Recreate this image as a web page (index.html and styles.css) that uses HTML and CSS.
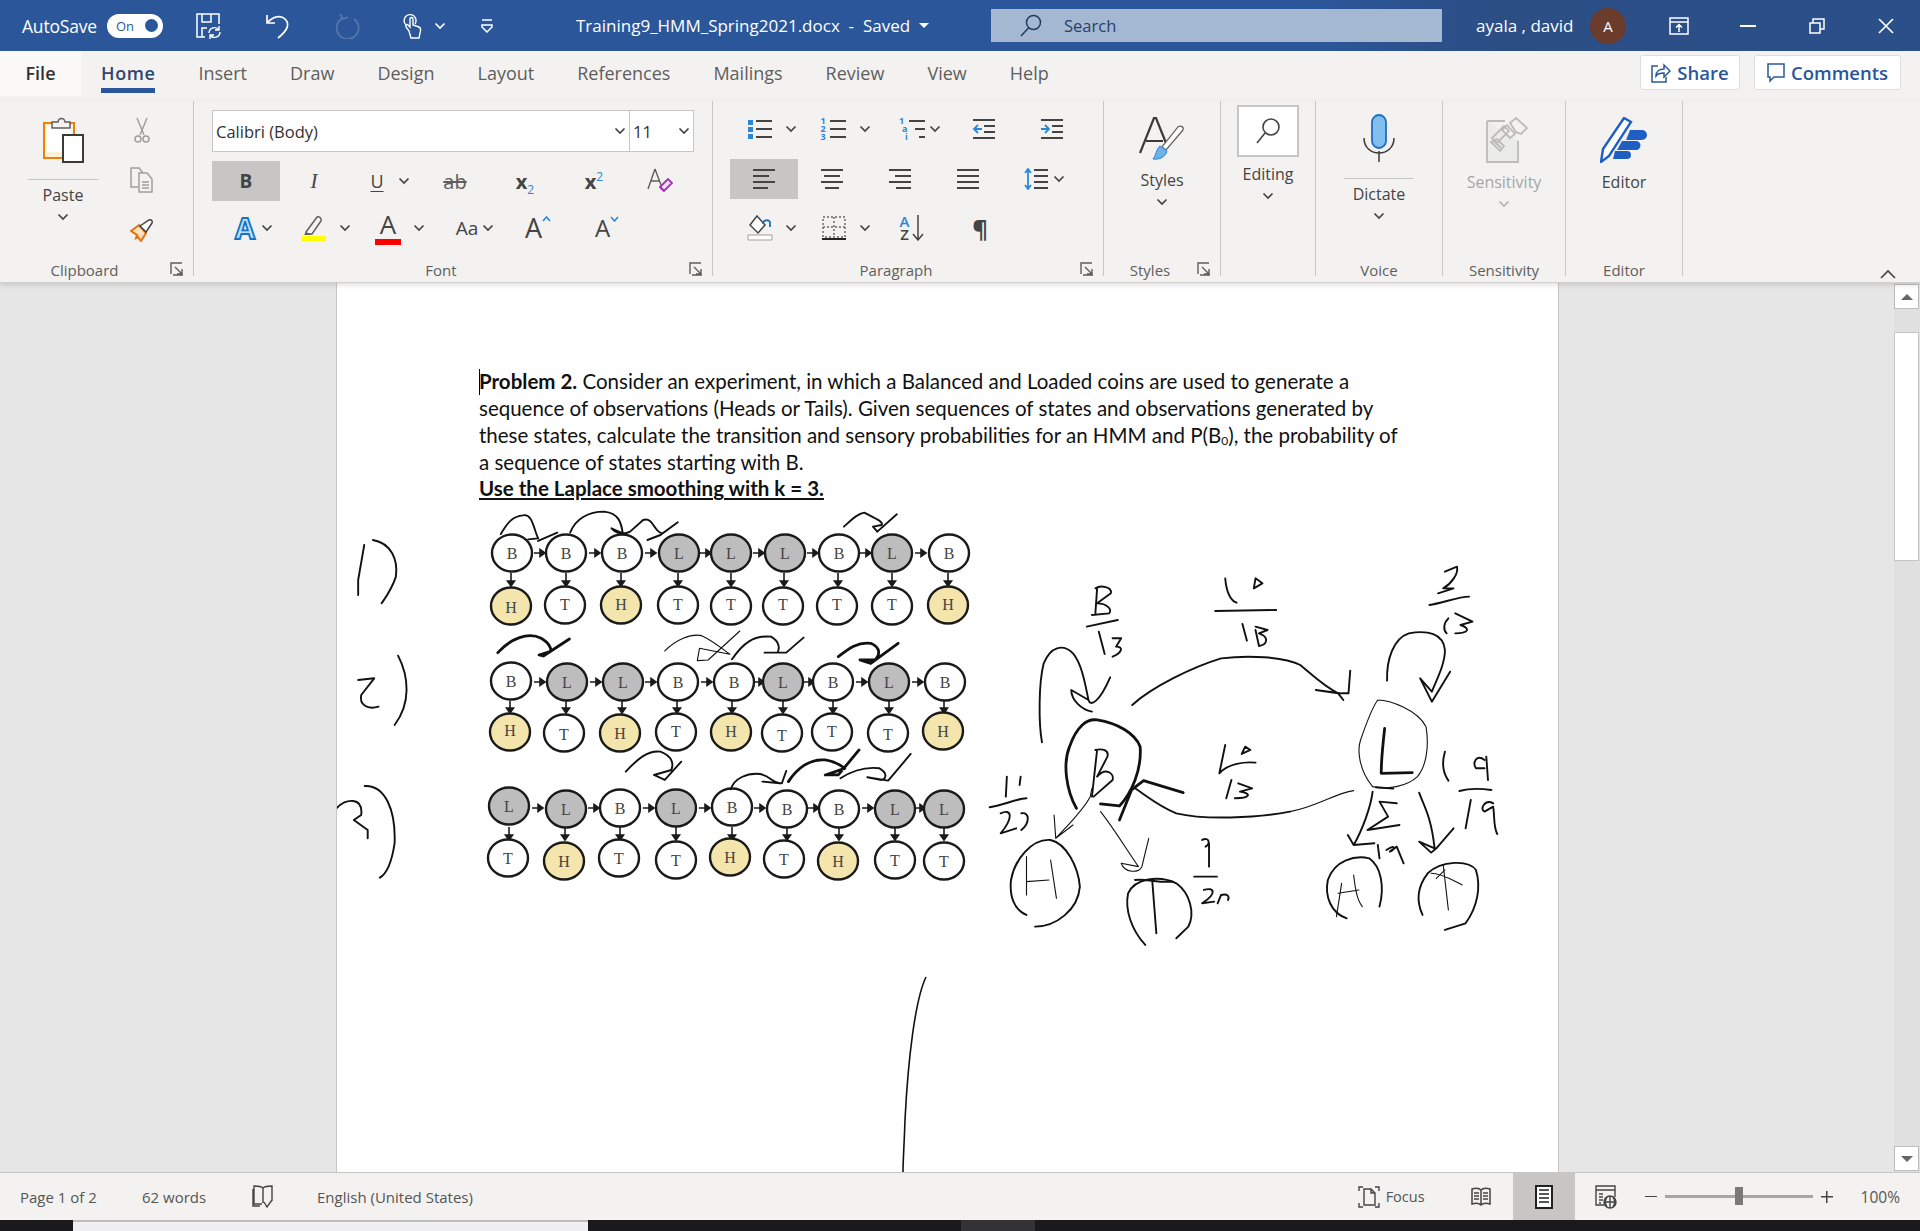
FILE: index.html
```html
<!DOCTYPE html>
<html lang="en">
<head>
  <meta charset="UTF-8" />
  <title>Training9_HMM_Spring2021.docx - Word</title>
  <link rel="stylesheet" href="styles.css">
</head>
<body>

  <svg class="defs" width="0" height="0">
    <symbol id="chev" viewBox="0 0 12 8"><path d="M1.5 1.5 6 6l4.5-4.5" fill="none" stroke="#444" stroke-width="1.7"/></symbol>
    <symbol id="launch" viewBox="0 0 14 14"><path d="M1 12V1h11M5 5l7 7M12 7v5H7M3 13h10" fill="none" stroke="#605e5c" stroke-width="1.4"/></symbol>
  </svg>

  <header class="titlebar">
    <div class="qat">
      <span class="autosave">AutoSave</span>
      <span class="toggle"><span>On</span><i></i></span>
      <svg class="q-save" width="26" height="26" viewBox="0 0 26 26" fill="none" stroke="#fff" stroke-width="1.5"><path d="M9 24H1V1h22v10M6 1v8h9V1M6 24v-9h5"/><path d="M13 20a5.5 5.5 0 0 1 10-3M24 19a5.5 5.5 0 0 1-10 3M23 13v4h-4M14 26v-4h4" stroke-width="1.4"/></svg>
      <svg class="q-undo" width="24" height="26" viewBox="0 0 24 26" fill="none" stroke="#fff" stroke-width="1.7"><path d="M1 2v8h8M1 10c6-7 14-8 18-4 5 5 3 11-7 19"/></svg>
      <svg class="q-redo" width="24" height="26" viewBox="0 0 24 26" fill="none" stroke="#5577ab" stroke-width="1.7"><path d="M7 5a11 11 0 1 0 11 1M4 1l3 5 5-2"/></svg>
      <svg class="q-touch" width="20" height="26" viewBox="0 0 20 26" fill="none" stroke="#fff" stroke-width="1.4"><path d="M3 12a6 6 0 1 1 9-1M6 18l-3-4c-1-2 1-3 2-2l2 2V6c0-2 3-2 3 0v6l6 2c2 1 2 3 1 6l-1 5H8z"/></svg>
      <svg class="q-chev" width="12" height="8"><path d="M1.5 1.5 6 6l4.5-4.5" fill="none" stroke="#fff" stroke-width="1.7"/></svg>
      <svg class="q-cust" width="12" height="14" viewBox="0 0 12 14"><path d="M1 1h10" stroke="#fff" stroke-width="1.5"/><path d="M1 6h10v2l-5 5-5-5z" fill="none" stroke="#fff" stroke-width="1.5"/></svg>
    </div>
    <div class="doc-title">Training9_HMM_Spring2021.docx&nbsp; - &nbsp;Saved <i class="caret-w"></i></div>
    <div class="search">
      <svg width="22" height="24" viewBox="0 0 22 24" fill="none" stroke="#1f3a63" stroke-width="1.5"><circle cx="13.5" cy="8.5" r="7"/><path d="M8.5 14 1 22"/></svg>
      <span>Search</span>
    </div>
    <div class="user">ayala , david</div>
    <div class="avatar">A</div>
    <div class="winbtns">
      <svg class="w-disp" width="20" height="18" viewBox="0 0 20 18" fill="none" stroke="#fff" stroke-width="1.5"><path d="M1 1h18v16H1zM1 5h18M10 15V8M7 10.5l3-3 3 3"/></svg>
      <svg class="w-min" width="16" height="2"><path d="M0 1h16" stroke="#fff" stroke-width="2"/></svg>
      <svg class="w-rest" width="16" height="16" viewBox="0 0 16 16" fill="none" stroke="#fff" stroke-width="1.5"><path d="M1 5h10v10H1zM4 5V1h11v10h-4"/></svg>
      <svg class="w-close" width="16" height="16" viewBox="0 0 16 16"><path d="M1 1l14 14M15 1 1 15" stroke="#fff" stroke-width="1.7"/></svg>
    </div>
  </header>

  <nav class="tabs">
    <span class="tab file">File</span>
    <span class="tab home">Home</span>
    <span class="tab">Insert</span>
    <span class="tab">Draw</span>
    <span class="tab">Design</span>
    <span class="tab">Layout</span>
    <span class="tab">References</span>
    <span class="tab">Mailings</span>
    <span class="tab">Review</span>
    <span class="tab">View</span>
    <span class="tab">Help</span>
    <div class="actions">
      <span class="act share">
        <svg width="20" height="20" viewBox="0 0 20 20" fill="none" stroke="#2b579a" stroke-width="1.5"><path d="M7 3H1v16h14v-5M5 13c0-5 4-7 8-7V2l6 6-6 6V10c-3 0-6 0-8 3z"/></svg>
        Share
      </span>
      <span class="act comments">
        <svg width="18" height="20" viewBox="0 0 18 20" fill="none" stroke="#2b579a" stroke-width="1.5"><path d="M1 1h16v13H7l-4 4v-4H1z"/></svg>
        Comments
      </span>
    </div>
  </nav>

  <section class="ribbon">

    <div class="group g-clip">
      <div class="clip-cols">
        <div class="big">
          <svg class="big-ico" width="42" height="46" viewBox="0 0 42 46"><path d="M2 6h30v35H2z" fill="#fdf1d8" stroke="#e8820c" stroke-width="2"/><path d="M5 9h24v26H5z" fill="#fff"/><path d="M10 10V5h6a3.5 3.5 0 0 1 7 0h5v6H10z" fill="#f3f2f1" stroke="#605e5c" stroke-width="1.5"/><path d="M21 18h20v27H21z" fill="#fff" stroke="#3b3a39" stroke-width="2"/></svg>
          <hr class="big-line">
          <span class="big-txt">Paste</span>
          <svg class="chev"><use href="#chev"/></svg>
        </div>
        <div class="mini">
          <svg width="16" height="26" viewBox="0 0 16 26" fill="none" stroke="#a19f9d" stroke-width="1.5"><path d="M3 1l7 17M13 1 6 18"/><circle cx="4" cy="22" r="3"/><circle cx="12" cy="22" r="3"/></svg>
          <svg width="24" height="26" viewBox="0 0 24 26" fill="none" stroke="#a19f9d" stroke-width="1.5"><path d="M8 20H1V1h8l4 5M9 6h8l5 6v13H9zM12 15h7M12 18h7M12 21h7"/></svg>
          <svg width="24" height="24" viewBox="0 0 24 24"><path d="M1 13l8-6 7 8-5 8-3-4-2 1 1-3z" fill="#fbe2c2" stroke="#e8700c" stroke-width="2"/><path d="M10 8l9-6c2-1 4 1 3 3l-6 9z" fill="#fff" stroke="#444" stroke-width="1.5"/></svg>
        </div>
      </div>
      <div class="glabel has-launch">Clipboard</div>
      <svg class="launch"><use href="#launch"/></svg>
    </div>

    <div class="group g-font">
      <div class="combos">
        <div class="combo family"><span>Calibri (Body)</span><svg class="chev"><use href="#chev"/></svg></div>
        <div class="combo size"><span>11</span><svg class="chev"><use href="#chev"/></svg></div>
      </div>
      <div class="cells font-r2">
        <span class="cell on t-b">B</span>
        <span class="cell t-i">I</span>
        <span class="cell g14"><span class="t-u">U</span><svg class="chev"><use href="#chev"/></svg></span>
        <span class="cell t-ab">ab</span>
        <span class="cell"><span class="t-x">x<sub>2</sub></span></span>
        <span class="cell"><span class="t-x">x<sup>2</sup></span></span>
        <span class="cell">
          <svg width="26" height="26" viewBox="0 0 26 26"><path d="M8 1 1 21M8 1l6 16M4 13h8" fill="none" stroke="#605e5c" stroke-width="1.4"/><path d="M13 19l8-8 4 4-8 8z" fill="#f3dbf5" stroke="#a333b5" stroke-width="1.8"/><path d="M13 19l4 4" stroke="#a333b5" stroke-width="1.8"/></svg>
        </span>
      </div>
      <div class="cells font-r3">
        <span class="cell g6"><span class="t-fx">A</span><svg class="chev"><use href="#chev"/></svg></span>
        <span class="cell g12">
          <svg width="26" height="26" viewBox="0 0 26 26"><path d="M5 17 16 2c2-1 5 1 4 4L11 19H5z" fill="#f3f2f1" stroke="#605e5c" stroke-width="1.5"/><path d="M5 17l-2 3h8z" fill="#605e5c"/><path d="M1 21h24v5H1z" fill="#ff0"/></svg>
          <svg class="chev"><use href="#chev"/></svg>
        </span>
        <span class="cell g12">
          <span class="t-col">A</span>
          <svg class="chev"><use href="#chev"/></svg>
        </span>
        <span class="cell g4"><span class="t-aa">Aa</span><svg class="chev"><use href="#chev"/></svg></span>
        <span class="cell"><span class="t-grow">A<svg width="9" height="6"><path d="M1 5l3.5-4L8 5" fill="none" stroke="#2b88d8" stroke-width="1.6"/></svg></span></span>
        <span class="cell"><span class="t-shrink">A<svg width="9" height="6"><path d="M1 1l3.5 4L8 1" fill="none" stroke="#2b88d8" stroke-width="1.6"/></svg></span></span>
      </div>
      <div class="glabel has-launch">Font</div>
      <svg class="launch"><use href="#launch"/></svg>
    </div>

    <div class="group g-para">
      <div class="cells para-r1">
        <span class="cell g12">
          <svg width="26" height="22" viewBox="0 0 26 22"><path d="M1 2h5v5H1zM1 9h5v5H1zM1 16h5v5H1z" fill="#2b88d8"/><path d="M9 3h16M9 11h16M9 19h16" stroke="#444" stroke-width="1.8"/></svg>
          <svg class="chev"><use href="#chev"/></svg>
        </span>
        <span class="cell g12">
          <span class="num-ico">
            <span class="n-col"><span>1</span><span>2</span><span>3</span></span>
            <svg width="18" height="22" viewBox="0 0 18 22"><path d="M1 3h16M1 11h16M1 19h16" stroke="#444" stroke-width="1.8"/></svg>
          </span>
          <svg class="chev"><use href="#chev"/></svg>
        </span>
        <span class="cell g4">
          <span class="num-ico">
            <span class="n-col n-steps"><span>1</span><span>a</span><span>i</span></span>
            <svg width="18" height="22" viewBox="0 0 18 22"><path d="M1 3h16M7 11h10M11 19h6" stroke="#444" stroke-width="1.8"/></svg>
          </span>
          <svg class="chev"><use href="#chev"/></svg>
        </span>
        <span class="cell">
          <svg width="24" height="22" viewBox="0 0 24 22"><path d="M1 2h22M12 8h11M12 14h11M1 20h22" stroke="#444" stroke-width="1.8"/><path d="M10 11H2M6 7l-4 4 4 4" fill="none" stroke="#2b88d8" stroke-width="1.8"/></svg>
        </span>
        <span class="cell">
          <svg width="24" height="22" viewBox="0 0 24 22"><path d="M1 2h22M12 8h11M12 14h11M1 20h22" stroke="#444" stroke-width="1.8"/><path d="M1 11h8M5 7l4 4-4 4" fill="none" stroke="#2b88d8" stroke-width="1.8"/></svg>
        </span>
      </div>
      <div class="cells para-r2">
        <span class="cell on"><svg width="22" height="20" viewBox="0 0 22 20"><path d="M0 1h22M0 7h16M0 13h22M0 19h15" stroke="#444" stroke-width="1.8"/></svg></span>
        <span class="cell"><svg width="22" height="20" viewBox="0 0 22 20"><path d="M0 1h22M3 7h16M0 13h22M4 19h14" stroke="#444" stroke-width="1.8"/></svg></span>
        <span class="cell"><svg width="22" height="20" viewBox="0 0 22 20"><path d="M0 1h22M6 7h16M0 13h22M7 19h15" stroke="#444" stroke-width="1.8"/></svg></span>
        <span class="cell"><svg width="22" height="20" viewBox="0 0 22 20"><path d="M0 1h22M0 7h22M0 13h22M0 19h22" stroke="#444" stroke-width="1.8"/></svg></span>
        <span class="cell g5">
          <svg width="24" height="22" viewBox="0 0 24 22"><path d="M10 2h14M10 8h14M10 14h14M10 20h14" stroke="#444" stroke-width="1.8"/><path d="M4 1v20M1 5l3-4 3 4M1 17l3 4 3-4" fill="none" stroke="#2b88d8" stroke-width="1.8"/></svg>
          <svg class="chev"><use href="#chev"/></svg>
        </span>
      </div>
      <div class="cells para-r3">
        <span class="cell g12">
          <svg width="26" height="26" viewBox="0 0 26 26"><path d="M10 1 3 10l8 8 7-8z" fill="#fff" stroke="#444" stroke-width="1.5"/><path d="M16 9c0-4 5-5 7-2v5" fill="none" stroke="#1e6fbf" stroke-width="1.8"/><path d="M1 20h24v5H1z" fill="#fff" stroke="#a19f9d"/></svg>
          <svg class="chev"><use href="#chev"/></svg>
        </span>
        <span class="cell g12">
          <svg width="26" height="26" viewBox="0 0 26 26" fill="none"><path d="M2 2h22v20H2zM13 2v20M2 12h22" stroke="#666" stroke-width="1.4" stroke-dasharray="2 2"/><path d="M1 24h24" stroke="#222" stroke-width="2"/></svg>
          <svg class="chev"><use href="#chev"/></svg>
        </span>
        <span class="cell t-sort">
          <span class="sort-az"><b>A</b><i>Z</i></span>
          <svg width="12" height="26" viewBox="0 0 12 26" fill="none" stroke="#444" stroke-width="1.5"><path d="M6 0v24M1 19l5 6 5-6"/></svg>
        </span>
        <span class="cell t-pil">¶</span>
      </div>
      <div class="glabel has-launch">Paragraph</div>
      <svg class="launch"><use href="#launch"/></svg>
    </div>

    <div class="group g-styles">
      <div class="big">
        <svg class="big-ico" width="46" height="44" viewBox="0 0 46 44"><path d="M1 36 15 1h2l12 30M7 24h17" fill="none" stroke="#3b3a39" stroke-width="2.2"/><path d="M44 13 27 33l-4-3 16-20c3-2 6 0 5 3z" fill="#fff" stroke="#605e5c" stroke-width="1.2"/><path d="M21 29l7 5c-1 6-8 9-14 8 3-3 3-10 7-13z" fill="#6db3ea" stroke="#2b88d8"/></svg>
        <span class="big-txt lab-s">Styles</span>
        <svg class="chev"><use href="#chev"/></svg>
      </div>
      <div class="glabel has-launch">Styles</div>
      <svg class="launch"><use href="#launch"/></svg>
    </div>

    <div class="group g-edit">
      <div class="big">
        <div class="edit-box">
          <svg width="24" height="26" viewBox="0 0 24 26" fill="none" stroke="#444" stroke-width="1.6"><circle cx="15" cy="9" r="8"/><path d="M9 15 1 25"/></svg>
        </div>
        <span class="big-txt lab-e">Editing</span>
        <svg class="chev"><use href="#chev"/></svg>
      </div>
    </div>

    <div class="group g-voice">
      <div class="big">
        <svg class="big-ico" width="32" height="48" viewBox="0 0 32 48"><path d="M9 8a7 7 0 0 1 14 0v19a7 7 0 0 1-14 0z" fill="#83bfee" stroke="#1e6fbf" stroke-width="1.8"/><path d="M1 24c0 20 30 20 30 0M16 37v11" fill="none" stroke="#3b3a39" stroke-width="1.5"/></svg>
        <hr class="big-line">
        <span class="big-txt">Dictate</span>
        <svg class="chev"><use href="#chev"/></svg>
      </div>
      <div class="glabel">Voice</div>
    </div>

    <div class="group g-sens">
      <div class="big">
        <svg class="big-ico sens-ico" width="42" height="46" viewBox="0 0 42 46" fill="none" stroke="#bdbbb9" stroke-width="1.8"><path d="M1 4h18M1 4v41h31V24" fill="#ebebea"/><path d="M6 21 18 9l5 5-12 12zM11 22l7 7-4 5-9-9zM8 24l7 7M24 6l6-5 11 10-6 6-5-2z"/><path d="M21 8l8 9-5 4-8-8z"/></svg>
        <span class="big-txt off lab-s">Sensitivity</span>
        <svg class="chev dim"><use href="#chev"/></svg>
      </div>
      <div class="glabel">Sensitivity</div>
    </div>

    <div class="group g-editor">
      <div class="big">
        <svg class="big-ico" width="48" height="46" viewBox="0 0 48 46"><path d="M30 13h12a5 5 0 0 1 0 10H26zM22 24h14a4.5 4.5 0 0 1 0 9H17zM15 34h12a4 4 0 0 1 0 8H13z" fill="#1e5fc4"/><path d="M1 45 3 32 24 1l7 4L9 39z" fill="#fff" stroke="#1e5fc4" stroke-width="2.4"/></svg>
        <span class="big-txt lab-s">Editor</span>
      </div>
      <div class="glabel">Editor</div>
    </div>

    <svg class="collapse" width="16" height="10" viewBox="0 0 16 10"><path d="M1 9l7-7 7 7" fill="none" stroke="#444" stroke-width="1.6"/></svg>
  </section>

  <main class="workspace">
    <div class="page">
      <div class="body-text">
        <p><span class="cursor"></span><b>Problem 2.</b> Consider an experiment, in which a Balanced and Loaded coins are used to generate a<br>
        sequence of observations (Heads or Tails). Given sequences of states and observations generated by<br>
        these states, calculate the transition and sensory probabilities for an HMM and P(B<sub>0</sub>), the probability of<br>
        a sequence of states starting with B.</p>
        <p class="strong-u">Use the Laplace smoothing with k = 3.</p>
      </div>

      <svg class="canvas" width="1221" height="889" viewBox="337 283 1221 889">
        <g class="arrows">
          <path d="M534 553h6m0-3.5l5 3.5-5 3.5zM589 553h6m0-3.5l5 3.5-5 3.5zM645 553h6m0-3.5l5 3.5-5 3.5zM700 553h6m0-3.5l5 3.5-5 3.5zM753 553h6m0-3.5l5 3.5-5 3.5zM807 553h6m0-3.5l5 3.5-5 3.5zM860 553h6m0-3.5l5 3.5-5 3.5zM915 553h6m0-3.5l5 3.5-5 3.5z"/>
          <path d="M511 573v8m-3.5 0l3.5 5 3.5-5zM566 573v8m-3.5 0l3.5 5 3.5-5zM621 573v8m-3.5 0l3.5 5 3.5-5zM678 573v8m-3.5 0l3.5 5 3.5-5zM731 573v8m-3.5 0l3.5 5 3.5-5zM784 573v8m-3.5 0l3.5 5 3.5-5zM838 573v8m-3.5 0l3.5 5 3.5-5zM892 573v8m-3.5 0l3.5 5 3.5-5zM948 573v8m-3.5 0l3.5 5 3.5-5z"/>
          <path d="M534 682h6m0-3.5l5 3.5-5 3.5zM590 682h6m0-3.5l5 3.5-5 3.5zM645 682h6m0-3.5l5 3.5-5 3.5zM701 682h6m0-3.5l5 3.5-5 3.5zM753 682h6m0-3.5l5 3.5-5 3.5zM803 682h6m0-3.5l5 3.5-5 3.5zM856 682h6m0-3.5l5 3.5-5 3.5zM912 682h6m0-3.5l5 3.5-5 3.5z"/>
          <path d="M510 701v7m-3.5 0l3.5 5 3.5-5zM566 701v7m-3.5 0l3.5 5 3.5-5zM622 701v7m-3.5 0l3.5 5 3.5-5zM677 701v7m-3.5 0l3.5 5 3.5-5zM732 701v7m-3.5 0l3.5 5 3.5-5zM783 701v7m-3.5 0l3.5 5 3.5-5zM833 701v7m-3.5 0l3.5 5 3.5-5zM889 701v7m-3.5 0l3.5 5 3.5-5zM944 701v7m-3.5 0l3.5 5 3.5-5z"/>
          <path d="M532 808h6m0-3.5l5 3.5-5 3.5zM588 808h6m0-3.5l5 3.5-5 3.5zM643 808h6m0-3.5l5 3.5-5 3.5zM699 808h6m0-3.5l5 3.5-5 3.5zM754 808h6m0-3.5l5 3.5-5 3.5zM808 808h6m0-3.5l5 3.5-5 3.5zM862 808h6m0-3.5l5 3.5-5 3.5zM914 808h6m0-3.5l5 3.5-5 3.5z"/>
          <path d="M509 827v8m-3.5 0l3.5 5 3.5-5zM565 827v8m-3.5 0l3.5 5 3.5-5zM620 827v8m-3.5 0l3.5 5 3.5-5zM676 827v8m-3.5 0l3.5 5 3.5-5zM732 827v8m-3.5 0l3.5 5 3.5-5zM787 827v8m-3.5 0l3.5 5 3.5-5zM839 827v8m-3.5 0l3.5 5 3.5-5zM895 827v8m-3.5 0l3.5 5 3.5-5zM944 827v8m-3.5 0l3.5 5 3.5-5z"/>
        </g>

        <g class="nodes">
          <ellipse cx="512" cy="553"/><text x="512" y="553">B</text>
          <ellipse cx="566" cy="553"/><text x="566" y="553">B</text>
          <ellipse cx="622" cy="553"/><text x="622" y="553">B</text>
          <ellipse class="g" cx="679" cy="553"/><text x="679" y="553">L</text>
          <ellipse class="g" cx="731" cy="553"/><text x="731" y="553">L</text>
          <ellipse class="g" cx="785" cy="553"/><text x="785" y="553">L</text>
          <ellipse cx="839" cy="553"/><text x="839" y="553">B</text>
          <ellipse class="g" cx="892" cy="553"/><text x="892" y="553">L</text>
          <ellipse cx="949" cy="553"/><text x="949" y="553">B</text>

          <ellipse class="y" cx="511" cy="606"/><text x="511" y="607">H</text>
          <ellipse cx="565" cy="605"/><text x="565" y="604">T</text>
          <ellipse class="y" cx="621" cy="605"/><text x="621" y="604">H</text>
          <ellipse cx="678" cy="605"/><text x="678" y="604">T</text>
          <ellipse cx="731" cy="606"/><text x="731" y="604">T</text>
          <ellipse cx="783" cy="606"/><text x="783" y="604">T</text>
          <ellipse cx="837" cy="606"/><text x="837" y="604">T</text>
          <ellipse cx="892" cy="606"/><text x="892" y="604">T</text>
          <ellipse class="y" cx="948" cy="605"/><text x="948" y="604">H</text>

          <ellipse cx="511" cy="681"/><text x="511" y="681">B</text>
          <ellipse class="g" cx="567" cy="682"/><text x="567" y="682">L</text>
          <ellipse class="g" cx="623" cy="682"/><text x="623" y="682">L</text>
          <ellipse cx="678" cy="682"/><text x="678" y="682">B</text>
          <ellipse cx="734" cy="682"/><text x="734" y="682">B</text>
          <ellipse class="g" cx="783" cy="682"/><text x="783" y="682">L</text>
          <ellipse cx="833" cy="682"/><text x="833" y="682">B</text>
          <ellipse class="g" cx="889" cy="682"/><text x="889" y="682">L</text>
          <ellipse cx="945" cy="682"/><text x="945" y="682">B</text>

          <ellipse class="y" cx="510" cy="732"/><text x="510" y="730">H</text>
          <ellipse cx="564" cy="733"/><text x="564" y="734">T</text>
          <ellipse class="y" cx="620" cy="733"/><text x="620" y="733">H</text>
          <ellipse cx="676" cy="732"/><text x="676" y="731">T</text>
          <ellipse class="y" cx="731" cy="732"/><text x="731" y="731">H</text>
          <ellipse cx="782" cy="733"/><text x="782" y="735">T</text>
          <ellipse cx="832" cy="732"/><text x="832" y="731">T</text>
          <ellipse cx="888" cy="733"/><text x="888" y="734">T</text>
          <ellipse class="y" cx="943" cy="731"/><text x="943" y="731">H</text>

          <ellipse class="g" cx="509" cy="806"/><text x="509" y="806">L</text>
          <ellipse class="g" cx="566" cy="809"/><text x="566" y="809">L</text>
          <ellipse cx="620" cy="808"/><text x="620" y="808">B</text>
          <ellipse class="g" cx="676" cy="808"/><text x="676" y="808">L</text>
          <ellipse cx="732" cy="807"/><text x="732" y="807">B</text>
          <ellipse cx="787" cy="809"/><text x="787" y="809">B</text>
          <ellipse cx="839" cy="809"/><text x="839" y="809">B</text>
          <ellipse class="g" cx="895" cy="809"/><text x="895" y="809">L</text>
          <ellipse class="g" cx="944" cy="809"/><text x="944" y="809">L</text>

          <ellipse cx="508" cy="858"/><text x="508" y="858">T</text>
          <ellipse class="y" cx="564" cy="861"/><text x="564" y="861">H</text>
          <ellipse cx="619" cy="858"/><text x="619" y="858">T</text>
          <ellipse cx="676" cy="860"/><text x="676" y="860">T</text>
          <ellipse class="y" cx="730" cy="857"/><text x="730" y="857">H</text>
          <ellipse cx="784" cy="859"/><text x="784" y="859">T</text>
          <ellipse class="y" cx="838" cy="861"/><text x="838" y="861">H</text>
          <ellipse cx="895" cy="860"/><text x="895" y="860">T</text>
          <ellipse cx="944" cy="861"/><text x="944" y="861">T</text>
        </g>

        <!-- pen strokes over the coin rows -->
        <g class="ink" transform="translate(320 490) scale(.4337 .3333)">
          <path d="M417 132C432 98 445 78 468 76 490 70 492 115 503 145L480 148M503 153 547 128"/>
          <path d="M577 127C590 85 620 65 655 65 690 70 695 100 698 130L672 115C680 130 700 135 715 125L745 90C770 80 770 130 790 130L825 97 785 135 755 150"/>
          <path d="M1208 110C1225 90 1240 70 1255 68 1280 85 1300 95 1295 105L1275 110 1285 125 1330 73"/>
          <path class="fat" d="M410 488C440 445 480 425 510 445 530 460 535 480 530 485L505 495 515 498 575 447"/>
          <path class="thin" d="M795 483C820 450 855 430 880 437 910 455 925 475 945 493L875 475 870 512 895 510 968 423"/>
          <path d="M950 508C975 460 1000 435 1040 440 1060 455 1060 475 1055 488L1025 488 1075 488 1115 443"/>
          <path class="fat" d="M1195 500C1220 475 1240 455 1270 460 1295 475 1290 495 1280 510L1245 510 1270 520 1333 460"/>
          <path d="M705 845C730 810 755 780 785 785 815 800 815 825 810 840L770 855 795 870 833 815"/>
          <path d="M947 898C955 865 985 848 1015 852 1040 860 1040 875 1060 880L1020 875 1065 880 1075 843"/>
          <path class="fat" d="M1080 875C1100 835 1130 805 1165 810 1190 815 1205 830 1210 835L1165 855 1195 855 1243 780"/>
          <path d="M1200 865C1230 840 1260 830 1290 835 1310 850 1305 865 1295 870L1262 862 1310 872 1362 792"/>
          <path d="M102 165 88 270 88 315M122 150C165 160 180 210 175 260 165 300 150 325 142 340"/>
          <path d="M88 570 125 565 95 615C90 645 110 660 135 650M180 497C205 560 210 640 172 705"/>
          <path d="M38 955C60 925 100 920 95 975L78 990 110 1020 110 1045M103 888C150 885 175 960 172 1060 165 1120 155 1150 138 1163"/>
        </g>

        <!-- hand drawn state diagram -->
        <g class="ink" transform="translate(980 550) scale(.3444 .3333)">
          <path d="M180 577C170 520 170 400 185 340 205 290 240 280 270 310 295 340 305 400 315 450L265 420C265 450 295 480 325 485M315 450C320 470 345 460 378 382"/>
          <path d="M442 465C500 410 620 350 700 325 780 315 880 320 930 345 970 380 1000 410 1040 430L975 420 1050 430 1070 430 1075 362M1040 430 1055 450"/>
          <path class="fat" d="M280 775C250 720 240 640 260 590 280 530 310 505 340 510 400 520 450 550 465 590 470 660 440 730 405 768L350 762"/>
          <path class="thin" d="M1085 722C1030 730 980 770 900 785"/>
          <path d="M900 785C800 805 650 810 570 790 520 770 480 735 450 715"/>
          <path class="fat" d="M590 728 475 692 440 720 405 810"/>
          <path class="thin" d="M1155 450C1190 450 1270 480 1295 530 1305 590 1295 650 1270 680 1240 710 1180 720 1140 710 1100 660 1095 600 1105 570 1125 510 1140 470 1155 450"/>
          <path class="fat" d="M1175 535C1170 580 1165 630 1165 670L1255 668"/>
          <path d="M1150 712 1200 716"/>
          <path d="M340 600 325 740M335 600C355 595 375 600 370 620L340 680C365 650 390 670 385 690L330 740"/>
          <path d="M135 1095C100 1080 85 1040 90 990 100 930 150 865 205 870 250 880 285 950 290 1010 285 1080 220 1130 160 1130"/>
          <path class="thin" d="M135 920 135 1035M135 995 200 990M205 930 222 1045"/>
          <path class="thin" d="M325 715 320 740C300 780 260 820 220 865L215 795M220 865 270 825"/>
          <path class="thin" d="M350 785C385 830 420 890 460 950L410 940C420 970 460 970 470 950L490 865"/>
          <path d="M480 1185C440 1140 420 1080 430 1030 450 985 520 975 570 1000 610 1030 625 1090 605 1130L570 1165"/>
          <path d="M450 990C480 985 520 1000 560 995M500 990 512 1150"/>
          <path d="M1140 725C1135 770 1110 840 1085 885L1068 855M1085 885 1145 880"/>
          <path d="M1275 728C1290 770 1310 800 1320 895L1275 875 1310 908 1325 895 1375 835"/>
          <path d="M1065 1105C1020 1090 1000 1040 1010 990 1030 930 1090 915 1130 925 1165 950 1175 1010 1160 1070 1130 1115 1095 1135"/>
          <path class="thin" d="M1050 1000 1035 1100M1040 1030 1100 1020M1085 975C1090 1020 1095 1050 1110 1070"/>
          <path d="M1285 1095C1265 1050 1270 1010 1300 970 1340 930 1420 930 1440 960 1455 1010 1445 1070 1410 1120L1350 1140"/>
          <path class="thin" d="M1310 970C1340 970 1370 990 1400 1005M1345 945 1360 1080M1325 985 1350 960"/>
          <path d="M1182 392C1180 330 1200 265 1245 250 1300 240 1345 250 1350 300 1350 340 1330 380 1312 425L1278 385 1312 455 1365 365"/>
          <path d="M335 115C350 105 385 110 380 130L340 160C370 160 385 180 375 190L325 195M340 115 335 190M310 230 400 210M345 245 362 312M385 265 410 265 395 290C420 290 410 310 385 320"/>
          <path d="M712 85C715 120 725 150 745 158M800 85 820 100 795 115ZM683 183 860 180M762 222 775 272M800 230 835 240 810 250C840 260 835 285 810 288L800 240"/>
          <path d="M1350 65 1385 50C1390 70 1370 100 1345 115L1375 115 1330 130M1305 165C1340 160 1390 140 1420 140M1360 205C1345 220 1345 240 1355 250M1380 190 1430 215 1395 225C1425 235 1420 250 1380 250"/>
          <path d="M712 585 695 670C720 640 770 635 800 638M770 590 785 600 760 612ZM730 690 715 745M750 700 790 715 755 725C790 730 785 745 740 745"/>
          <path d="M78 680 75 740M118 680 115 705M28 772C70 765 110 745 135 745M60 790C90 775 100 800 60 850L105 835M120 790C145 785 145 820 120 840"/>
          <path d="M645 870C665 860 670 880 655 890M665 880 665 950M622 980 688 980M650 1020C680 1010 690 1030 645 1060L680 1055M690 1060 700 1035C720 1030 725 1040 720 1050"/>
          <path d="M1210 760 1160 755 1185 800 1125 840 1218 825M1155 885 1160 925M1180 900C1210 880 1205 900 1190 905L1210 890 1230 940"/>
          <path d="M1350 605C1340 640 1345 670 1360 692M1465 630C1440 610 1430 640 1440 655L1465 655M1470 620 1475 690M1392 723C1420 715 1450 715 1485 720M1425 750 1410 835M1490 760C1465 745 1450 780 1465 785L1490 770C1495 800 1490 830 1502 852"/>
        </g>

        <path class="ink-line" d="M926 977C915 1000 908 1060 905 1120 904 1150 903 1160 903 1172"/>
      </svg>
    </div>

    <div class="scrollbar">
      <div class="sb-btn"><i class="tri-up"></i></div>
      <div class="sb-track"><div class="sb-thumb"></div></div>
      <div class="sb-btn"><i class="tri-down"></i></div>
    </div>
  </main>

  <footer class="statusbar">
    <span class="st-page">Page 1 of 2</span>
    <span class="st-words">62 words</span>
    <svg class="st-book" width="22" height="24" viewBox="0 0 22 24" fill="none" stroke="#444" stroke-width="1.4"><path d="M11 3C9 1 5 1 2 1v18h8M11 3c2-2 6-2 9-2v15M11 3v15M1 4v17h7M12 17l3 5 5-7"/></svg>
    <span class="st-lang">English (United States)</span>
    <div class="st-right">
      <svg class="st-focus" width="22" height="22" viewBox="0 0 22 22" fill="none" stroke="#444" stroke-width="1.4"><path d="M1 5V1h4M17 1h4v4M21 17v4h-4M5 21H1v-4M6 19V3h7l4 4v12zM13 3v4h4"/></svg>
      <span class="st-ftxt">Focus</span>
      <svg class="st-read" width="20" height="20" viewBox="0 0 20 20" fill="none" stroke="#444" stroke-width="1.5"><path d="M10 3C8 1 4 1 1 2v15c3-1 7-1 9 1 2-2 6-2 9-1V2c-3-1-7-1-9 1zM10 3v15M3 6h5M3 9h5M3 12h5M12 6h5M12 9h5M12 12h5"/></svg>
      <span class="st-print"><svg width="18" height="24" viewBox="0 0 18 24"><path d="M1 1h16v22H1z" fill="#fff" stroke="#222" stroke-width="2"/><path d="M4 5h10M4 9h10M4 13h10M4 17h10" stroke="#222" stroke-width="1.6"/></svg></span>
      <svg class="st-web" width="22" height="24" viewBox="0 0 22 24" fill="none" stroke="#444" stroke-width="1.4"><path d="M9 20H1V1h19v11M1 5h19M4 9h4M4 12h4M4 15h4M4 18h2"/><circle cx="15" cy="17" r="6"/><path d="M9 17h12M15 11v12M12 12c-2 3-2 7 0 10M18 12c2 3 2 7 0 10"/></svg>
      <div class="zoomer">
        <span class="z-minus"></span>
        <div class="z-track"><i></i></div>
        <span class="z-plus"></span>
      </div>
      <span class="st-zoom">100%</span>
    </div>
  </footer>

  <div class="taskbar">
    <div class="tb-window"></div>
    <div class="tb-item"></div>
  </div>

</body>
</html>
```

FILE: styles.css
```css
* { box-sizing: border-box; }

html, body {
  margin: 0;
  height: 1231px;
  overflow: hidden;
}

body {
  width: 1920px;
  display: flex;
  flex-direction: column;
  font-family: "Open Sans", sans-serif;
  color: #444;
  background: #f3f2f1;
}

.defs { position: absolute; }

svg { display: block; flex: none; }

/* title bar */
.titlebar {
  height: 51px;
  flex: none;
  display: flex;
  align-items: center;
  color: #fff;
  background: linear-gradient(90deg, #2b579a 0, #2b579a 68%, #2b4e85 78%, #2b5089 100%);
}

.qat {
  width: 576px;
  flex: none;
  display: flex;
  align-items: center;
  padding-left: 22px;
}

.autosave { width: 85px; font-size: 17.5px; letter-spacing: -0.2px; }

.toggle {
  width: 56px;
  height: 24px;
  border-radius: 12px;
  background: #fff;
  color: #2b579a;
  font-size: 13px;
  display: flex;
  align-items: center;
  justify-content: space-between;
  padding: 0 5px 0 9px;
}

.toggle i {
  width: 13px;
  height: 13px;
  border-radius: 50%;
  background: #2b579a;
}

.q-save { margin-left: 33px; }
.q-undo { margin-left: 44px; }
.q-redo { margin-left: 46px; }
.q-touch { margin-left: 43px; }
.q-chev { margin-left: 11px; }
.q-cust { margin-left: 35px; }

.doc-title {
  width: 415px;
  flex: none;
  font-size: 17px;
  display: flex;
  align-items: center;
  white-space: nowrap;
}

.caret-w {
  margin-left: 9px;
  border-left: 5px solid transparent;
  border-right: 5px solid transparent;
  border-top: 5px solid #fff;
}

.search {
  width: 451px;
  height: 33px;
  flex: none;
  background: #a5b8d2;
  color: #26406a;
  font-size: 16.5px;
  display: flex;
  align-items: center;
  gap: 22px;
  padding-left: 29px;
}

.user {
  margin-left: 34px;
  width: 114px;
  flex: none;
  font-size: 17px;
  white-space: nowrap;
}

.avatar {
  width: 36px;
  height: 36px;
  flex: none;
  border-radius: 50%;
  background: #6b3b2c;
  font-size: 15px;
  display: flex;
  align-items: center;
  justify-content: center;
}

.winbtns {
  display: flex;
  align-items: center;
}

.w-disp { margin-left: 43px; }
.w-min { margin-left: 51px; }
.w-rest { margin-left: 53px; }
.w-close { margin-left: 53px; }

/* tabs */
.tabs {
  height: 50px;
  flex: none;
  display: flex;
  align-items: flex-start;
  gap: 43px;
  font-size: 18px;
  color: #605e5c;
}

.tab {
  height: 45px;
  line-height: 45px;
  white-space: nowrap;
}

.file {
  width: 81px;
  margin-right: -23px;
  background: #faf9f8;
  color: #323130;
  text-align: center;
  font-weight: 600;
}

.home {
  position: relative;
  color: #2f4570;
  font-weight: 600;
  letter-spacing: 0.6px;
}

.home::after {
  content: "";
  position: absolute;
  left: 0;
  right: 0;
  top: 37px;
  height: 5px;
  background: #2b579a;
}

.actions {
  margin-left: auto;
  padding: 4px 19px 0 0;
  display: flex;
  gap: 14px;
}

.act {
  height: 35px;
  display: flex;
  align-items: center;
  justify-content: center;
  gap: 6px;
  background: #fff;
  border: 1px solid #e1dfdd;
  border-radius: 3px;
  color: #2b579a;
  font-weight: 600;
  font-size: 18.5px;
}

.share { width: 100px; }
.comments { width: 147px; }

/* ribbon */
.ribbon {
  height: 182px;
  flex: none;
  display: flex;
  align-items: flex-start;
  position: relative;
  z-index: 1;
  border-bottom: 1px solid #d2d0ce;
  box-shadow: 0 2px 5px rgba(0, 0, 0, 0.13);
  background: #f3f2f1;
}

.group {
  height: 175px;
  flex: none;
  position: relative;
  display: flex;
  flex-direction: column;
  border-right: 1px solid #c8c6c4;
}

.g-clip { width: 194px; }
.g-font { width: 519px; padding: 9px 0 0 18px; }
.g-para { width: 391px; padding: 8px 0 0 17px; }
.g-styles { width: 117px; }
.g-edit { width: 95px; }
.g-voice { width: 127px; }
.g-sens { width: 123px; }
.g-editor { width: 117px; }

.glabel {
  margin-top: auto;
  height: 12px;
  line-height: 12px;
  font-size: 15px;
  text-align: center;
  color: #605e5c;
  white-space: nowrap;
}

.has-launch { padding-right: 24px; }

.g-font .glabel { margin-left: -18px; }
.g-para .glabel { margin-left: -17px; }

.launch {
  position: absolute;
  right: 9px;
  bottom: 0;
  width: 14px;
  height: 14px;
}

.chev { width: 12px; height: 8px; }
.chev.dim { opacity: 0.35; }

.big {
  display: flex;
  flex-direction: column;
  align-items: center;
  padding-top: 16px;
}

.big-line {
  width: 70px;
  height: 1px;
  margin: 16px 0 0;
  border: none;
  background: #c8c6c4;
}

.big-txt {
  font-size: 16px;
  line-height: 22px;
  margin-top: 4px;
  color: #444;
  white-space: nowrap;
}

.big-txt + .chev { margin-top: 7px; }

.lab-s { margin-top: 8px; }
.lab-e { margin-top: 6px; }

.off { color: #a6a6a6; }

.sens-ico { margin-left: 6px; }

.clip-cols {
  display: grid;
  grid-template-columns: 126px 32px;
}

.mini {
  display: flex;
  flex-direction: column;
  align-items: center;
  padding-top: 16px;
}

.mini svg:nth-child(2) { margin-top: 24px; }
.mini svg:nth-child(3) { margin-top: 25px; }

.combos { display: flex; }

.combo {
  height: 42px;
  display: flex;
  align-items: center;
  justify-content: space-between;
  background: #fff;
  border: 1px solid #c8c6c4;
  padding: 0 3px;
  font-size: 16.5px;
  color: #323130;
}

.family { width: 418px; }
.size { width: 65px; margin-left: -1px; }

.cells {
  display: grid;
  height: 40px;
}

.cell {
  display: flex;
  align-items: center;
  justify-content: center;
  color: #444;
}

.cell.on { background: #c8c6c4; }

.g4 { gap: 4px; }
.g5 { gap: 5px; }
.g6 { gap: 6px; }
.g12 { gap: 12px; }
.g14 { gap: 14px; }

.font-r2 {
  margin-top: 9px;
  grid-template-columns: 68px 68px 84px 46px 94px 44px 88px;
}

.font-r3 {
  margin-top: 7px;
  grid-template-columns: 84px 60px 88px 62px 64px 74px;
}

.t-b { font-weight: 700; font-size: 19px; }
.t-i { font-family: "Liberation Serif", serif; font-style: italic; font-size: 21px; }
.t-u { font-size: 18px; text-decoration: underline; text-underline-offset: 3px; }

.t-ab {
  font-size: 20px;
  color: #605e5c;
  text-decoration: line-through;
}

.t-x { font-weight: 700; font-size: 20px; }

.t-x sub, .t-x sup {
  font-size: 12px;
  font-weight: 400;
  color: #2b88d8;
  line-height: 0;
}

.t-fx {
  font-size: 29px;
  font-weight: 700;
  line-height: 32px;
  color: #bfe0f8;
  -webkit-text-stroke: 1.8px #1473c6;
}

.t-col {
  width: 26px;
  height: 34px;
  text-align: center;
  font-size: 26px;
  line-height: 27px;
  border-bottom: 6px solid #f00;
}

.t-aa { font-size: 19px; }

.t-grow, .t-shrink {
  display: flex;
  align-items: flex-start;
  line-height: 32px;
}

.t-grow { font-size: 27px; }
.t-shrink { font-size: 24px; }

.t-grow svg, .t-shrink svg { margin-top: 4px; }

.para-r1 { grid-template-columns: 83px 65px 84px 44px 92px; }
.para-r2 { margin-top: 10px; grid-template-columns: 68px 68px 68px 68px 85px; }
.para-r3 { margin-top: 9px; grid-template-columns: 83px 65px 68px 68px; }

.num-ico {
  width: 26px;
  display: flex;
  align-items: center;
  justify-content: space-between;
}

.n-col {
  display: flex;
  flex-direction: column;
  font-size: 9px;
  font-weight: 700;
  line-height: 8px;
  color: #2b88d8;
}

.n-steps span:nth-child(2) { margin-left: 3px; }
.n-steps span:nth-child(3) { margin-left: 6px; }

.t-sort { gap: 3px; }

.sort-az {
  display: flex;
  flex-direction: column;
  font-size: 15px;
  line-height: 13px;
  text-align: center;
}

.sort-az b { font-weight: 600; color: #2b88d8; }
.sort-az i { font-style: normal; font-weight: 600; }

.t-pil {
  font-size: 24px;
  font-weight: 700;
}

.edit-box {
  width: 62px;
  height: 52px;
  background: #fff;
  border: 2px solid #c8c6c4;
  display: flex;
  align-items: center;
  justify-content: center;
}

.g-edit .big { padding-top: 4px; }
.g-voice .big { padding-top: 13px; }

.collapse {
  position: absolute;
  right: 24px;
  bottom: 3px;
}

/* document area */
.workspace {
  height: 889px;
  flex: none;
  display: flex;
  background: #e6e6e6;
}

.page {
  width: 1223px;
  height: 889px;
  margin: 0 335px 0 336px;
  flex: none;
  position: relative;
  overflow: hidden;
  background: #fff;
  border-left: 1px solid #c8c6c4;
  border-right: 1px solid #c8c6c4;
}

.body-text {
  padding: 85px 0 0 142px;
  font-family: Lato, "Liberation Sans", sans-serif;
  font-size: 20.5px;
  line-height: 26.8px;
  color: #111;
  white-space: nowrap;
}

.body-text p { margin: 0; }

.body-text sub { font-size: 12px; line-height: 0; vertical-align: -2px; }

.strong-u {
  font-weight: 700;
  text-decoration: underline;
}

.cursor {
  display: inline-block;
  width: 1px;
  height: 26px;
  margin-right: -1px;
  vertical-align: -6px;
  background: #000;
}

.canvas {
  position: absolute;
  left: 0;
  top: 0;
  pointer-events: none;
}

.arrows path {
  fill: #1a1a1a;
  stroke: #1a1a1a;
  stroke-width: 1.6;
}

.nodes ellipse {
  rx: 20px;
  ry: 18.5px;
  fill: #fff;
  stroke: #1a1a1a;
  stroke-width: 2.4;
}

.nodes ellipse.g { fill: #bdbdbd; }
.nodes ellipse.y { fill: #f3e5ab; }

.nodes text {
  font-family: "Liberation Serif", serif;
  font-size: 16px;
  fill: #444;
  text-anchor: middle;
  dominant-baseline: central;
}

.ink path {
  fill: none;
  stroke: #111;
  stroke-width: 1.9;
  stroke-linecap: round;
  stroke-linejoin: round;
  vector-effect: non-scaling-stroke;
}

.ink path.fat { stroke-width: 2.8; }
.ink path.thin { stroke-width: 1.1; }

.ink-line {
  fill: none;
  stroke: #111;
  stroke-width: 1.6;
}

.scrollbar {
  width: 26px;
  height: 889px;
  flex: none;
  display: flex;
  flex-direction: column;
  padding: 1px 1px 1px 0;
  background: #e0e0e0;
}

.sb-btn {
  height: 25px;
  flex: none;
  background: #fff;
  border: 1px solid #bdbdbd;
  display: flex;
  align-items: center;
  justify-content: center;
}

.sb-track { flex: 1; padding-top: 23px; }

.sb-thumb {
  height: 229px;
  background: #fff;
  border: 1px solid #c8c6c4;
}

.tri-up, .tri-down {
  border-left: 6px solid transparent;
  border-right: 6px solid transparent;
}

.tri-up { border-bottom: 6px solid #666; }
.tri-down { border-top: 6px solid #666; }

/* status bar */
.statusbar {
  height: 48px;
  flex: none;
  display: flex;
  align-items: center;
  padding-left: 20px;
  border-top: 1px solid #c8c6c4;
  background: #f3f2f1;
  font-size: 15px;
  color: #555;
  white-space: nowrap;
}

.st-page { width: 122px; }
.st-words { width: 110px; }
.st-book { margin: 0 43px 0 0; }

.st-right {
  margin-left: auto;
  height: 100%;
  display: flex;
  align-items: center;
}

.st-ftxt { margin-left: 6px; font-size: 14.5px; }
.st-read { margin-left: 46px; }

.st-print {
  width: 62px;
  height: 100%;
  margin-left: 22px;
  background: #c8c6c4;
  display: flex;
  align-items: center;
  justify-content: center;
}

.st-web { margin-left: 20px; }

.zoomer {
  margin-left: 28px;
  display: flex;
  align-items: center;
}

.z-minus { width: 12px; height: 1.5px; background: #444; }

.z-track {
  width: 148px;
  height: 3px;
  margin: 0 8px;
  position: relative;
  background: #a8a6a4;
}

.z-track i {
  position: absolute;
  left: 70px;
  top: -8px;
  width: 8px;
  height: 18px;
  background: #7a7876;
}

.z-plus {
  width: 12px;
  height: 12px;
  background:
    linear-gradient(#444, #444) center / 100% 1.5px no-repeat,
    linear-gradient(#444, #444) center / 1.5px 100% no-repeat;
}

.st-zoom { margin: 0 20px 0 28px; font-size: 15.5px; }

/* windows taskbar, only the top edge shows */
.taskbar {
  height: 11px;
  flex: none;
  position: relative;
  overflow: hidden;
  background: #1a1a1a;
}

.tb-window {
  width: 515px;
  height: 11px;
  margin-left: 73px;
  background: #f0f0f0;
  border-top: 2px solid #bdbdbd;
}

.tb-item {
  position: absolute;
  left: 961px;
  top: 0;
  width: 74px;
  height: 11px;
  background: #333;
}
```
